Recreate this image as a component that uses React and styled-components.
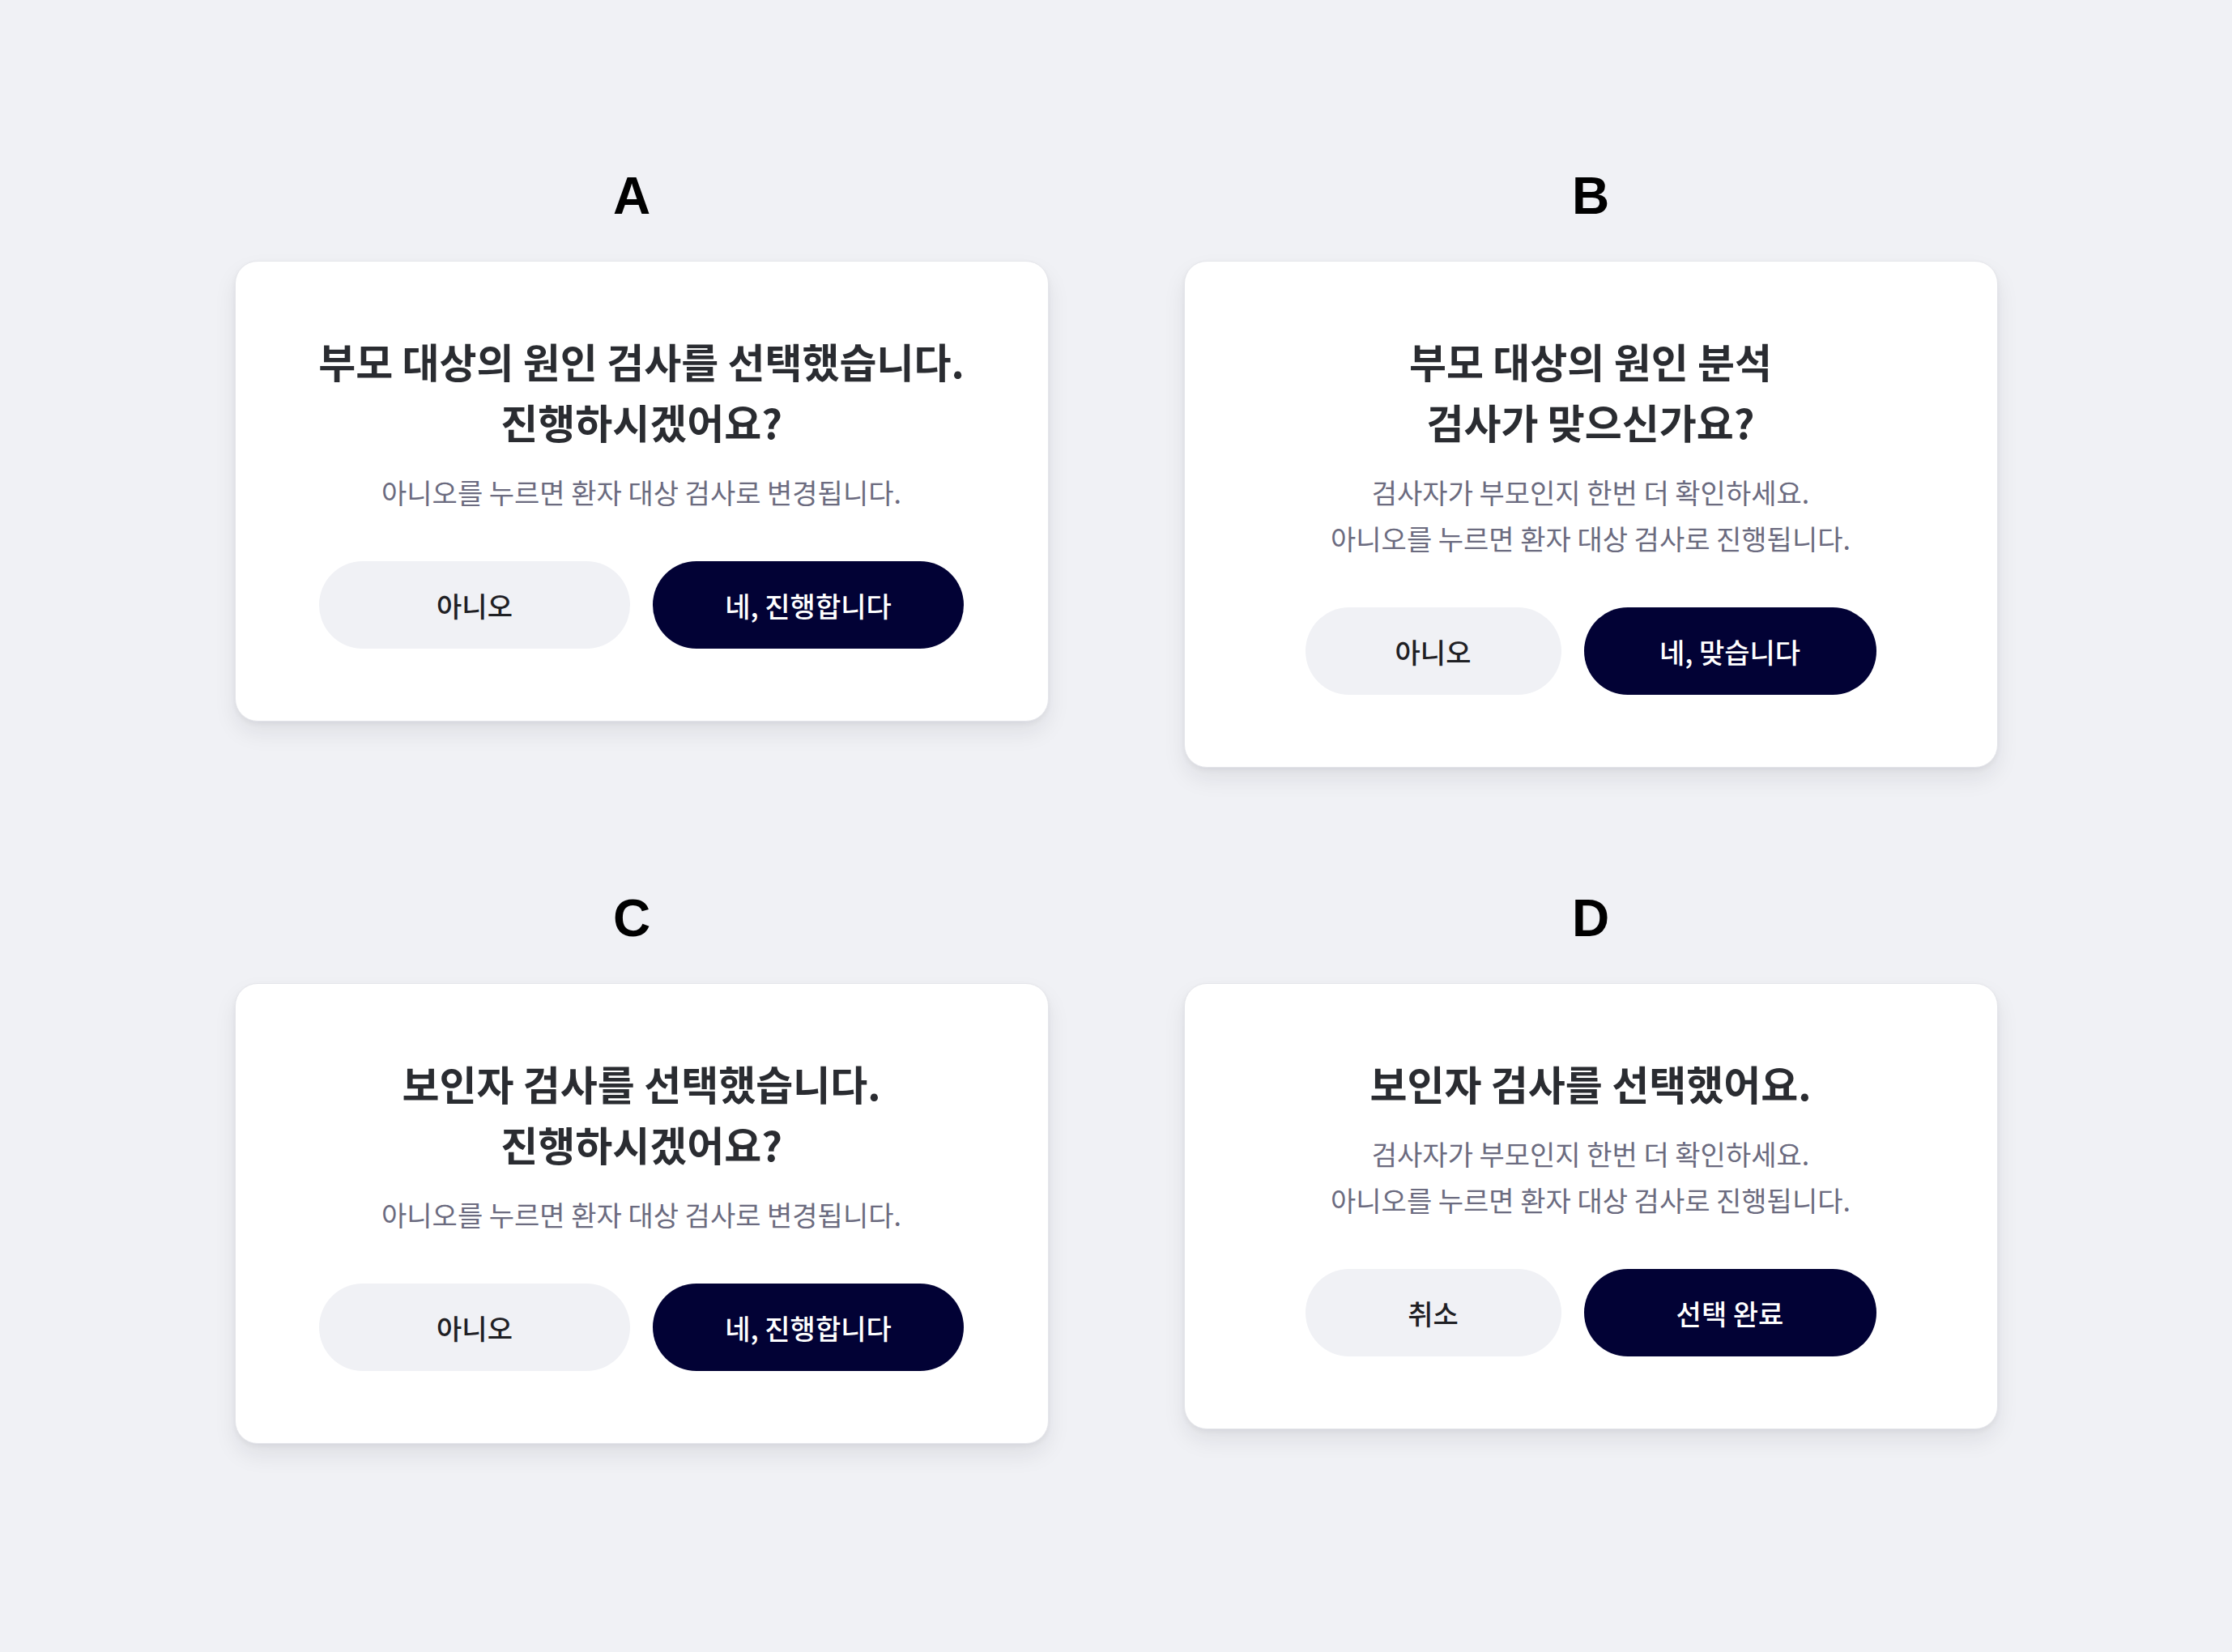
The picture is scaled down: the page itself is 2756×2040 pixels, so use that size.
import React from "react";
import styled, { createGlobalStyle } from "styled-components";

const dialogs = [
  {
    label: "A",
    title: ["부모 대상의 원인 검사를 선택했습니다.", "진행하시겠어요?"],
    desc: ["아니오를 누르면 환자 대상 검사로 변경됩니다."],
    cancel: "아니오",
    confirm: "네, 진행합니다",
    widths: [384, 384],
  },
  {
    label: "B",
    title: ["부모 대상의 원인 분석", "검사가 맞으신가요?"],
    desc: [
      "검사자가 부모인지 한번 더 확인하세요.",
      "아니오를 누르면 환자 대상 검사로 진행됩니다.",
    ],
    cancel: "아니오",
    confirm: "네, 맞습니다",
    widths: [316, 361],
  },
  {
    label: "C",
    title: ["보인자 검사를 선택했습니다.", "진행하시겠어요?"],
    desc: ["아니오를 누르면 환자 대상 검사로 변경됩니다."],
    cancel: "아니오",
    confirm: "네, 진행합니다",
    widths: [384, 384],
  },
  {
    label: "D",
    title: ["보인자 검사를 선택했어요."],
    desc: [
      "검사자가 부모인지 한번 더 확인하세요.",
      "아니오를 누르면 환자 대상 검사로 진행됩니다.",
    ],
    cancel: "취소",
    confirm: "선택 완료",
    widths: [316, 361],
  },
];

function Lines({ lines }) {
  return lines.map((line, i) => (
    <React.Fragment key={i}>
      {i > 0 && <br />}
      {line}
    </React.Fragment>
  ));
}

function App() {
  return (
    <>
      <GlobalStyle />
      <Page>
        {dialogs.map((d, i) => (
          <Variant key={d.label}>
            {/* left column labels sit a little off-centre in the design */}
            <Label $left={i % 2 === 0}>{d.label}</Label>
            <Card>
              <Title>
                <Lines lines={d.title} />
              </Title>
              <Desc>
                <Lines lines={d.desc} />
              </Desc>
              <Actions>
                <Button type="button" $width={d.widths[0]}>
                  {d.cancel}
                </Button>
                <Button type="button" $width={d.widths[1]} $primary>
                  {d.confirm}
                </Button>
              </Actions>
            </Card>
          </Variant>
        ))}
      </Page>
    </>
  );
}

export default App;

const GlobalStyle = createGlobalStyle`
  html, body {
    margin: 0;
    background: #f0f1f5;
  }
  body {
    font-family: "Noto Sans CJK KR", "Noto Sans", sans-serif;
  }
`;

const Page = styled.main`
  display: grid;
  grid-template-columns: repeat(2, 1005px);
  justify-content: center;
  align-items: start;
  column-gap: 167px;
  row-gap: 154px;
  padding: 210px 0 259px;
  min-height: 2040px;
  box-sizing: border-box;
`;

const Variant = styled.section`
  display: flex;
  flex-direction: column;
  align-items: center;
`;

const Label = styled.h2`
  margin: 0 ${(p) => (p.$left ? "24px" : "0")} 48px 0;
  font-family: "Liberation Sans", Arial, sans-serif;
  font-size: 64px;
  font-weight: 700;
  line-height: 1;
  color: #000;
`;

const Card = styled.div`
  width: 100%;
  box-sizing: border-box;
  padding: 85px 0 89px;
  background: #fff;
  border: 1px solid #e4e5ea;
  border-radius: 28px;
  box-shadow: 0 14px 28px rgba(20, 24, 40, 0.08), 0 3px 6px rgba(20, 24, 40, 0.05);
  text-align: center;
`;

const Title = styled.h3`
  margin: 0;
  font-size: 50px;
  font-weight: 700;
  line-height: 75px;
  color: #2a2c31;
`;

const Desc = styled.p`
  margin: 21px 0 0;
  font-size: 34px;
  font-weight: 400;
  line-height: 57px;
  color: #6b6b7f;
`;

const Actions = styled.div`
  display: flex;
  justify-content: center;
  gap: 28px;
  margin-top: 57px;
`;

const Button = styled.button`
  width: ${(p) => p.$width}px;
  height: 108px;
  border: none;
  border-radius: 54px;
  background: ${(p) => (p.$primary ? "#020235" : "#f0f1f5")};
  color: ${(p) => (p.$primary ? "#fff" : "#1f2024")};
  font-family: inherit;
  font-size: 34px;
  font-weight: 500;
  cursor: pointer;
`;
